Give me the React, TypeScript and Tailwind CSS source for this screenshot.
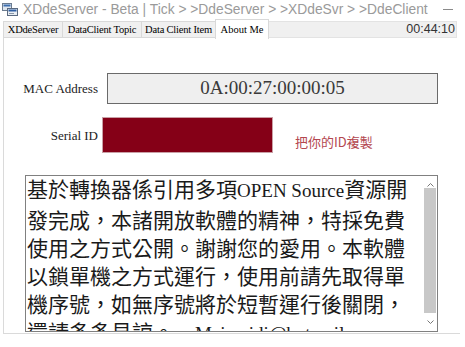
import React from 'react'

// ─── Fonts ────────────────────────────────────────────────────────────────────

const SERIF = '"Liberation Serif", "Noto Sans CJK TC", serif'
const SANS = '"Liberation Sans", "Noto Sans CJK TC", sans-serif'
const CJK = '"Noto Sans CJK TC", "Liberation Sans", sans-serif'

const TABS = [
  { label: 'XDdeServer', w: 'w-[60px]' },
  { label: 'DataClient Topic', w: 'w-[80px]' },
  { label: 'Data Client Item', w: 'w-[75px]' },
  { label: 'About Me', w: 'w-[54px]', active: true },
]

// ─── Title bar ────────────────────────────────────────────────────────────────

function AppIcon() {
  return (
    <svg width="16" height="13" viewBox="0 0 16 13">
      <rect x="0.5" y="0.5" width="9" height="7" fill="#dfe6ee" stroke="#6c7c90" />
      <rect x="1.5" y="1.5" width="7" height="2" fill="#3d6fb0" />
      <rect x="5.5" y="5.5" width="10" height="7" fill="#e9eef4" stroke="#5a6a80" />
      <rect x="6.5" y="6.5" width="8" height="2" fill="#2e5ea3" />
      <rect x="7" y="10" width="5" height="1" fill="#8a97a8" />
    </svg>
  )
}

function TitleBar() {
  return (
    <div className="flex h-[19px] items-center">
      <div className="ml-[2px] flex items-center">
        <AppIcon />
      </div>
      <span className="ml-[5px] text-[13.8px] leading-none text-[#9a9a9a] whitespace-nowrap" style={{ fontFamily: SANS }}>
        XDdeServer - Beta | Tick &gt; &gt;DdeServer &gt; &gt;XDdeSvr &gt; &gt;DdeClient
      </span>
      <div className="ml-auto mr-[2px] flex h-full items-center">
        <div className="flex w-[40px] justify-center">
          <div className="h-px w-[10px] bg-[#8a8a8a]" />
        </div>
        <div className="flex w-[40px] justify-center">
          <div className="h-[9px] w-[9px] border border-[#8a8a8a]" />
        </div>
        <div className="flex w-[40px] justify-center">
          <svg width="11" height="11" viewBox="0 0 11 11">
            <path d="M0.5 0.5 L10.5 10.5 M10.5 0.5 L0.5 10.5" stroke="#8a8a8a" strokeWidth="1" />
          </svg>
        </div>
      </div>
    </div>
  )
}

// ─── Tab strip ────────────────────────────────────────────────────────────────

function TabStrip() {
  return (
    <div className="flex h-[19px] items-end pl-[3px]" style={{ fontFamily: SERIF }}>
      {TABS.map((t) =>
        t.active ? (
          <div
            key={t.label}
            className={`${t.w} -mb-px flex h-[20px] items-center justify-center border border-b-0 border-[#d9d9d9] bg-white text-[10.5px] text-black`}
          >
            {t.label}
          </div>
        ) : (
          <div
            key={t.label}
            className={`${t.w} -mr-px flex h-[17px] items-center justify-center border border-[#d9d9d9] bg-[#f0f0f0] text-[10.5px] tracking-[-0.2px] text-black`}
          >
            {t.label}
          </div>
        ),
      )}
      <div className="flex h-[17px] w-[188px] items-center justify-end border border-l-0 border-[#e3e3e3] bg-[#f0f0f0] pr-px">
        <span className="text-[12.5px] text-[#333]" style={{ fontFamily: SANS }}>
          00:44:10
        </span>
      </div>
    </div>
  )
}

// ─── About page ───────────────────────────────────────────────────────────────

function Latin({ children }: { children: React.ReactNode }) {
  return (
    <span className="text-[19px]" style={{ fontFamily: SERIF }}>
      {children}
    </span>
  )
}

const LINES: React.ReactNode[] = [
  <>基於轉換器係引用多項<Latin>OPEN Source</Latin>資源開</>,
  '發完成，本諸開放軟體的精神，特採免費',
  '使用之方式公開。謝謝您的愛用。本軟體',
  '以鎖單機之方式運行，使用前請先取得單',
  '機序號，如無序號將於短暫運行後關閉，',
  <>還請多多見諒。　<Latin>Meimeidi@hotmail.com</Latin></>,
]

function ScrollBar() {
  return (
    <div className="flex w-[14px] flex-col items-center bg-white">
      <div className="flex h-[11px] items-end justify-center">
        <svg width="7" height="4" viewBox="0 0 7 4">
          <path d="M0.5 3.5 L3.5 0.5 L6.5 3.5" fill="none" stroke="#777" strokeWidth="1" />
        </svg>
      </div>
      <div className="mt-[1px] h-[125px] w-[12px] bg-[#c8c8c8]" />
      <div className="flex flex-1 items-center justify-center">
        <svg width="7" height="4" viewBox="0 0 7 4">
          <path d="M0.5 0.5 L3.5 3.5 L6.5 0.5" fill="none" stroke="#777" strokeWidth="1" />
        </svg>
      </div>
    </div>
  )
}

function AboutPage() {
  return (
    <div className="ml-[3px] flex h-[296px] w-[457px] flex-col border-b border-l border-[#dadada] bg-white">
      {/* MAC address */}
      <div className="mt-[35px] flex items-center">
        <div className="w-[94px] text-right text-[13px] text-[#222]" style={{ fontFamily: SERIF }}>
          MAC Address
        </div>
        <div
          className="ml-[9px] flex h-[31px] w-[331px] items-center justify-center border border-[#6a6a6a] bg-[#efefef] text-[19px] text-[#3a3a3a]"
          style={{ fontFamily: SERIF }}
        >
          0A:00:27:00:00:05
        </div>
      </div>

      {/* Serial ID */}
      <div className="mt-[13px] flex items-start">
        <div className="mt-[10px] w-[94px] text-right text-[13px] leading-[18px] text-[#222]" style={{ fontFamily: SERIF }}>
          Serial ID
        </div>
        <div className="ml-[4px] h-[36px] w-[171px] border border-[#c9a0a6] bg-[#850017]" />
        <div className="ml-[22px] mt-[16px] text-[13px] leading-[18px] text-[#b4474f]" style={{ fontFamily: CJK }}>
          把你的ID複製
        </div>
      </div>

      {/* Notice */}
      <div className="ml-[21px] mt-[22px] flex h-[157px] w-[413px] border border-[#808080] bg-white">
        <div className="flex-1 overflow-hidden pl-[1px]">
          <div className="-mt-[2px] text-[21px] leading-[28px] text-[#1a1a1a] whitespace-nowrap" style={{ fontFamily: CJK }}>
            {LINES.map((l, i) => (
              <div key={i}>{l}</div>
            ))}
          </div>
        </div>
        <ScrollBar />
      </div>
    </div>
  )
}

export default function App() {
  return (
    <div className="h-[347px] w-[465px] overflow-hidden bg-white">
      <TitleBar />
      <TabStrip />
      <AboutPage />
    </div>
  )
}
